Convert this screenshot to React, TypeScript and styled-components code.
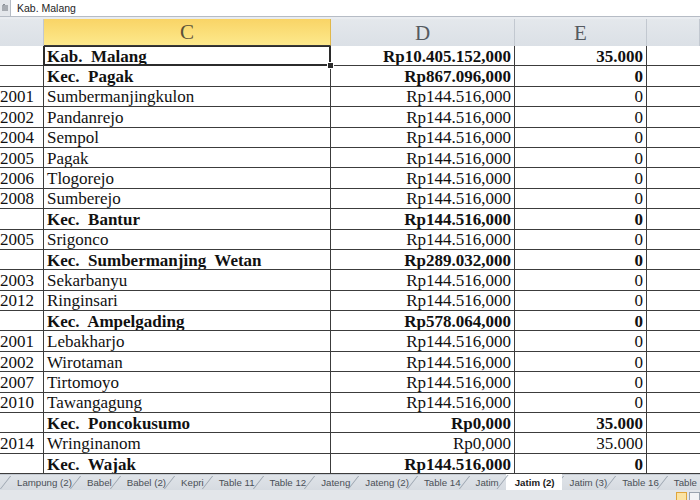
import React from "react";
import styled, { createGlobalStyle } from "styled-components";

const Global = createGlobalStyle`
  html, body { margin: 0; padding: 0; background: #ffffff; }
  body { width: 700px; height: 500px; overflow: hidden; }
  * { box-sizing: border-box; }
`;

const Page = styled.div`
  width: 700px;
  height: 500px;
  display: flex;
  flex-direction: column;
  overflow: hidden;
  background: #fff;
`;

const FormulaBar = styled.div`
  height: 17px;
  display: flex;
  align-items: stretch;
  border-bottom: 1px solid #b6bcc5;
  background: #fff;
`;

const ExpandBox = styled.div`
  width: 11px;
  background: #e4e7eb;
  border-right: 1px solid #b6bcc5;
  display: flex;
  align-items: center;
  justify-content: center;
`;

const FormulaText = styled.div`
  flex: 1;
  padding-left: 6px;
  display: flex;
  align-items: center;
  font-family: "Liberation Sans", Arial, sans-serif;
  font-size: 10.5px;
  color: #1e1e1e;
  white-space: pre;
`;

const Band = styled.div`
  height: 2px;
  background: #e9ecf0;
`;

const Cols = `44px 287px 184px 132px 1fr`;

const HeaderRow = styled.div`
  height: 27px;
  display: grid;
  grid-template-columns: ${Cols};
  border-bottom: 1px solid #a9b1bc;
`;

const HeaderCell = styled.div<{ $sel?: boolean }>`
  display: flex;
  align-items: center;
  justify-content: center;
  font-family: "Liberation Serif", "Times New Roman", serif;
  font-size: 21px;
  color: ${(p) => (p.$sel ? "#5b5138" : "#555a60")};
  background: ${(p) =>
    p.$sel
      ? "linear-gradient(#f9d466, #fde98c)"
      : "linear-gradient(#e4e8ec, #dbe0e6)"};
  border-right: 1px solid ${(p) => (p.$sel ? "#e1b84a" : "#c2c8d0")};
  border-bottom: ${(p) => (p.$sel ? "1px solid #3a3a3a" : "none")};
  padding-top: 1px;
`;

const Body = styled.div`
  flex: 1;
  display: flex;
  flex-direction: column;
  overflow: hidden;
`;

const Row = styled.div`
  height: 20.4px;
  flex: none;
  display: grid;
  grid-template-columns: ${Cols};
  border-bottom: 1px solid #3c3c3c;
`;

const Cell = styled.div<{ $bold?: boolean; $align?: "left" | "right"; $sel?: boolean }>`
  position: relative;
  display: flex;
  align-items: center;
  justify-content: ${(p) => (p.$align === "right" ? "flex-end" : "flex-start")};
  padding: 0 ${(p) => (p.$align === "right" ? "3px" : "0")} 0 ${(p) => (p.$align === "right" ? "0" : "3px")};
  font-family: "Liberation Serif", "Times New Roman", serif;
  font-size: 17px;
  font-weight: ${(p) => (p.$bold ? 700 : 400)};
  color: #111;
  white-space: pre;
  overflow: ${(p) => (p.$sel ? "visible" : "hidden")};
  border-right: 1px solid #3c3c3c;
  line-height: 1;
  padding-top: 1px;
  ${(p) =>
    p.$sel
      ? `
    &::after {
      content: "";
      position: absolute;
      left: -1px; top: -1px; right: -1px; bottom: -1px;
      border: 2px solid #2b2b2b;
      pointer-events: none;
    }
    &::before {
      content: "";
      position: absolute;
      right: -4px; bottom: -4px;
      width: 5px; height: 5px;
      background: #2b2b2b;
      border: 1px solid #fff;
      z-index: 2;
    }
  `
      : ""}
`;

const CodeCell = styled.div`
  display: flex;
  align-items: center;
  font-family: "Liberation Serif", "Times New Roman", serif;
  font-size: 17px;
  color: #111;
  overflow: hidden;
  white-space: pre;
  border-right: 1px solid #3c3c3c;
  line-height: 1;
  padding-top: 1px;
`;

const Blank = styled.div``;

const TabBar = styled.div`
  height: 26px;
  flex: none;
  display: flex;
  flex-direction: column;
  background: #e3e6ea;
  position: relative;
  z-index: 1;
`;

const TabStrip = styled.div`
  height: 16px;
  display: flex;
  align-items: stretch;
  padding-left: 9px;
  background: linear-gradient(#dfe3e8, #d6dbe1);
  border-top: 1px solid #c4cad2;
`;

const Tab = styled.div<{ $active?: boolean }>`
  position: relative;
  display: flex;
  align-items: center;
  padding: 0 7px 0 ${(p) => (p.$active ? "9px" : "8px")};
  margin-top: ${(p) => (p.$active ? "-1px" : "0")};
  font-family: "Liberation Sans", Arial, sans-serif;
  font-size: 9.7px;
  font-weight: ${(p) => (p.$active ? 700 : 400)};
  color: ${(p) => (p.$active ? "#1a1a1a" : "#4a4f56")};
  background: ${(p) => (p.$active ? "#ffffff" : "transparent")};
  white-space: pre;
  z-index: ${(p) => (p.$active ? 2 : 1)};
  &::before {
    content: "";
    position: absolute;
    left: -4px;
    top: 1px;
    bottom: 1px;
    width: 0;
    border-left: 1px solid #9aa3ae;
    transform: skewX(-38deg);
  }
`;

const BottomBand = styled.div`
  flex: 1;
  display: flex;
  justify-content: flex-end;
  align-items: flex-end;
  gap: 2px;
  padding-right: 0;
`;

const ViewBtn = styled.div<{ $on?: boolean }>`
  width: 11px;
  height: 8px;
  border: 1px solid ${(p) => (p.$on ? "#e0a53a" : "#9aa3ae")};
  border-bottom: none;
  background: ${(p) => (p.$on ? "#fbe3a3" : "#f2f3f5")};
`;

type R = { code?: string; name: string; d: string; e: string; bold?: boolean; sel?: boolean };

const rows: R[] = [
  { name: "Kab.  Malang", d: "Rp10.405.152,000", e: "35.000", bold: true, sel: true },
  { name: "Kec.  Pagak", d: "Rp867.096,000", e: "0", bold: true },
  { code: "2001", name: "Sumbermanjingkulon", d: "Rp144.516,000", e: "0" },
  { code: "2002", name: "Pandanrejo", d: "Rp144.516,000", e: "0" },
  { code: "2004", name: "Sempol", d: "Rp144.516,000", e: "0" },
  { code: "2005", name: "Pagak", d: "Rp144.516,000", e: "0" },
  { code: "2006", name: "Tlogorejo", d: "Rp144.516,000", e: "0" },
  { code: "2008", name: "Sumberejo", d: "Rp144.516,000", e: "0" },
  { name: "Kec.  Bantur", d: "Rp144.516,000", e: "0", bold: true },
  { code: "2005", name: "Srigonco", d: "Rp144.516,000", e: "0" },
  { name: "Kec.  Sumbermanjing  Wetan", d: "Rp289.032,000", e: "0", bold: true },
  { code: "2003", name: "Sekarbanyu", d: "Rp144.516,000", e: "0" },
  { code: "2012", name: "Ringinsari", d: "Rp144.516,000", e: "0" },
  { name: "Kec.  Ampelgading", d: "Rp578.064,000", e: "0", bold: true },
  { code: "2001", name: "Lebakharjo", d: "Rp144.516,000", e: "0" },
  { code: "2002", name: "Wirotaman", d: "Rp144.516,000", e: "0" },
  { code: "2007", name: "Tirtomoyo", d: "Rp144.516,000", e: "0" },
  { code: "2010", name: "Tawangagung", d: "Rp144.516,000", e: "0" },
  { name: "Kec.  Poncokusumo", d: "Rp0,000", e: "35.000", bold: true },
  { code: "2014", name: "Wringinanom", d: "Rp0,000", e: "35.000" },
  { name: "Kec.  Wajak", d: "Rp144.516,000", e: "0", bold: true },
  { name: "", d: "", e: "" },
];

const tabs = [
  "Lampung (2)",
  "Babel",
  "Babel (2)",
  "Kepri",
  "Table 11",
  "Table 12",
  "Jateng",
  "Jateng (2)",
  "Table 14",
  "Jatim",
  "Jatim (2)",
  "Jatim (3)",
  "Table 16",
  "Table 17",
];

export default function App() {
  return (
    <Page>
      <Global />
      <FormulaBar>
        <ExpandBox>
          <svg width="8" height="8" viewBox="0 0 8 8">
            <path d="M1 2h6M1 4h6M1 6h6" stroke="#6b7078" strokeWidth="1" />
            <path d="M2 1l2 -1" stroke="#6b7078" />
          </svg>
        </ExpandBox>
        <FormulaText>Kab. Malang</FormulaText>
      </FormulaBar>
      <Band />
      <HeaderRow>
        <HeaderCell />
        <HeaderCell $sel>C</HeaderCell>
        <HeaderCell>D</HeaderCell>
        <HeaderCell>E</HeaderCell>
        <HeaderCell />
      </HeaderRow>
      <Body>
        {rows.map((r, i) => (
          <Row key={i}>
            <CodeCell>{r.code ?? ""}</CodeCell>
            <Cell $bold={r.bold} $sel={r.sel}>
              {r.name}
            </Cell>
            <Cell $bold={r.bold} $align="right">
              {r.d}
            </Cell>
            <Cell $bold={r.bold} $align="right">
              {r.e}
            </Cell>
            <Blank />
          </Row>
        ))}
      </Body>
      <TabBar>
        <TabStrip>
          {tabs.map((t) => (
            <Tab key={t} $active={t === "Jatim (2)"}>
              {t}
            </Tab>
          ))}
        </TabStrip>
        <BottomBand>
          <ViewBtn $on />
          <ViewBtn />
        </BottomBand>
      </TabBar>
    </Page>
  );
}
